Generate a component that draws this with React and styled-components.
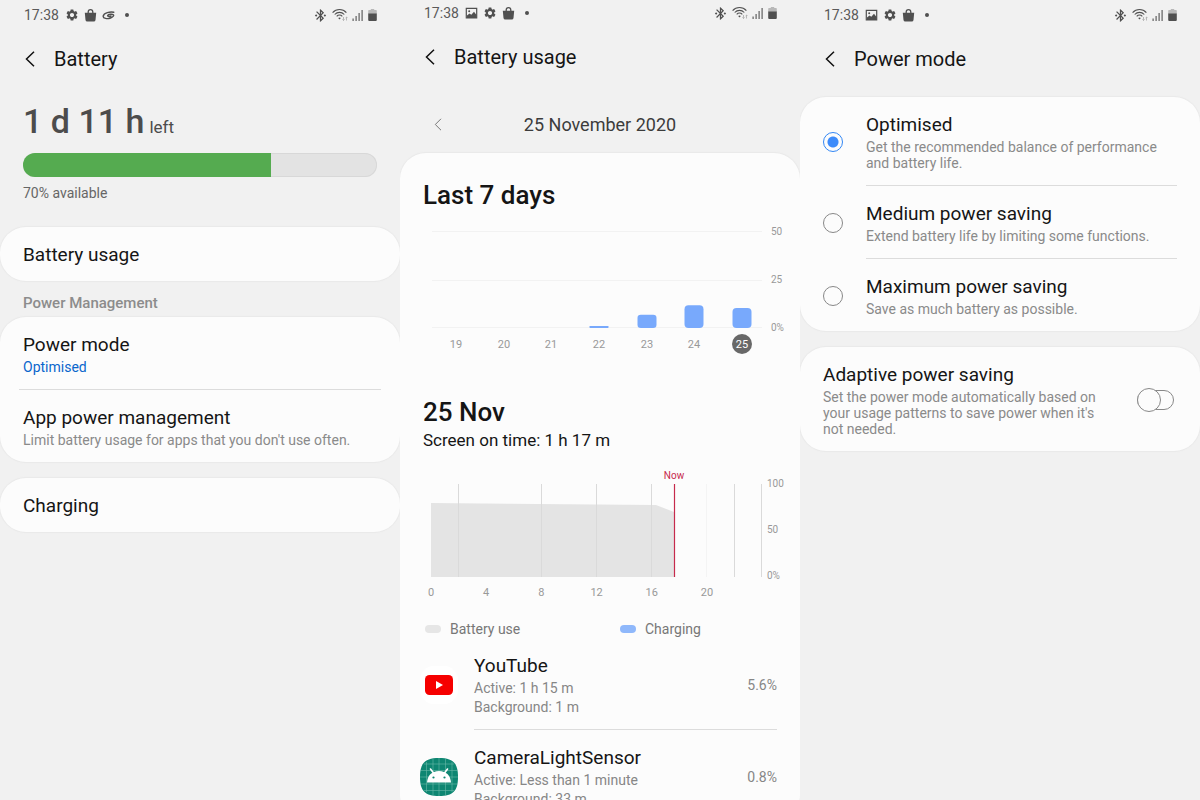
import React, { useState } from 'react'
import styled, { createGlobalStyle } from 'styled-components'
import { MdBluetoothConnected, MdSettings } from 'react-icons/md'

const week = [
    {day: 19, use: 0},
    {day: 20, use: 0},
    {day: 21, use: 0},
    {day: 22, use: 1},
    {day: 23, use: 7},
    {day: 24, use: 12},
    {day: 25, use: 10.5},
]

const modes = [
    {id: 'optimised', title: 'Optimised', text: 'Get the recommended balance of performance and battery life.'},
    {id: 'medium', title: 'Medium power saving', text: 'Extend battery life by limiting some functions.'},
    {id: 'maximum', title: 'Maximum power saving', text: 'Save as much battery as possible.'},
]

function ImageIcon() {
    return (
        <svg width="13" height="13" viewBox="0 0 13 13">
            <path d="M1.300 1.300h10.400v9.700H1.300z" fill="none" stroke="#505050" strokeWidth="1.200" />
            <path d="M2 11V8.500l2.500-2 1.800 1.300 2.700-3L11.500 8v3z" fill="#505050" />
            <circle cx="4.200" cy="4.200" r="1" fill="#505050" />
        </svg>
    )
}

function BagIcon() {
    return (
        <svg width="13" height="13" viewBox="0 0 13 13">
            <path d="M.8 3.800h11.400l-.7 7.100a1.800 1.800 0 0 1-1.800 1.600H3.300a1.800 1.800 0 0 1-1.800-1.600z" fill="#505050" />
            <path d="M4.200 4.200V3a2.300 2.300 0 0 1 4.600 0v1.200" fill="none" stroke="#505050" strokeWidth="1.300" />
        </svg>
    )
}

function SwirlIcon() {
    return (
        <svg width="13" height="13" viewBox="0 0 13 13" fill="none" stroke="#505050" strokeLinecap="round">
            <path d="M11.800 3.200C8 2.400 1.800 3.800 1.200 7c-.4 2.600 4.300 3.200 7.300 2 2.300-.9 3.800-2.400 2.800-3.300-1.200-1-4.800-.4-5.600.8-.5 1 1.600 1.300 3.300.5" strokeWidth="1.400" />
        </svg>
    )
}

function WifiIcon() {
    return (
        <svg width="16" height="14" viewBox="0 0 16 14" fill="none" stroke="#505050" strokeWidth="1.100">
            <path d="M.6 4.600C4.400.4 10.600.4 14.400 4.600" />
            <path d="M2.700 6.500c2.700-2.900 6.900-2.900 9.600 0" />
            <path d="M4.700 8.300c1.600-1.700 4-1.700 5.600 0" />
            <path d="M6.200 10a1.900 1.900 0 0 1 2.600 0l-1.300 1.500z" fill="#505050" stroke="none" />
            <path d="M11.500 9v3.500M10.400 11.400l1.100 1.100 1.100-1.100M14.500 12.500V9M13.600 9.900l.9-.9.9.9" stroke="#aaa" strokeWidth=".8" />
        </svg>
    )
}

function SignalIcon() {
    return (
        <svg width="12" height="12" viewBox="0 0 12 12" fill="#606060">
            <path d="M.5 9.500h1.200V12H.5zM3.500 7h1.200v5H3.500zM6.500 4h1.200v8H6.500zM9.500 1h1.200v11H9.500z" />
        </svg>
    )
}

function BatteryIcon() {
    return (
        <svg width="9" height="12" viewBox="0 0 9 12">
            <path d="M2.800 0h3.400v1H8a.8.800 0 0 1 .8.800V5H.2V1.800A.8.800 0 0 1 1 1h1.800z" fill="#b8b8b8" />
            <path d="M.2 4.500h8.600V11a1 1 0 0 1-1 1H1.200a1 1 0 0 1-1-1z" fill="#505050" />
        </svg>
    )
}

function Chevron({small}) {
    return small ? (
        <svg width="8" height="13" viewBox="0 0 8 13" fill="none" stroke="#777">
            <path d="M7 .8L1.300 6.500 7 12.200" />
        </svg>
    ) : (
        <svg width="10" height="16" viewBox="0 0 10 16" fill="none" stroke="#111" strokeWidth="1.500">
            <path d="M9 .8L1.500 8 9 15.200" />
        </svg>
    )
}

function YouTubeIcon() {
    return (
        <svg width="38" height="38" viewBox="0 0 38 38">
            <rect width="38" height="38" rx="14" fill="#fff" />
            <rect x="5" y="9" width="28" height="20" rx="4.500" fill="#f60000" />
            <path d="M16 15v8l7-4z" fill="#fff" />
        </svg>
    )
}

function AndroidIcon() {
    return (
        <svg width="38" height="38" viewBox="0 0 38 38">
            <path d="M19 0C33 0 38 5 38 19S33 38 19 38 0 33 0 19 5 0 19 0z" fill="#0e8672" />
            <path d="M6.500 4v30M13 1v36M19 0v38M25.500 1v36M32 4v30M4 6h30M1 12.500h36M0 19h38M1 26h36M4 32.500h30" stroke="#69b8a8" strokeWidth=".6" />
            <path d="M10.500 11l3 4M27.500 11l-3 4" stroke="#fff" strokeWidth="1.600" strokeLinecap="round" />
            <path d="M7 24.500c.3-6.500 4.500-11.500 12-11.500s11.700 5 12 11.500z" fill="#fff" />
            <circle cx="13.500" cy="19.500" r="1.100" fill="#0e8672" />
            <circle cx="24.500" cy="19.500" r="1.100" fill="#0e8672" />
        </svg>
    )
}

function StatusBar({icons}) {
    return (
        <StatusStyled>
            <time>17:38</time>
            {icons}
            <i />
            <div className="system">
                <MdBluetoothConnected size={15} />
                <WifiIcon />
                <SignalIcon />
                <BatteryIcon />
            </div>
        </StatusStyled>
    )
}

function Header({title}) {
    return (
        <HeaderStyled>
            <IconButton aria-label="Back"><Chevron /></IconButton>
            <h1>{title}</h1>
        </HeaderStyled>
    )
}

function WeekChart() {
    return (
        <ChartSvg viewBox="0 0 400 183" role="img" aria-label="Battery use in the last 7 days">
            <path className="grid" d="M32 19.500h330M32 68.500h330M32 115.500h330" />
            <text className="scale" x="371" y="23">50</text>
            <text className="scale" x="371" y="71">25</text>
            <text className="scale" x="371" y="119">0%</text>
            {week.map(({day, use}, i) => {
                const x = 56 + i * 48 - Math.round(i / 3)
                const height = use * 1.9
                const today = day === 25
                return (
                    <g key={day}>
                        {use > 0 && <rect x={x - 9.5} y={116 - height} width="19" height={height} rx={Math.min(4, height / 4)} fill="#78a9fc" />}
                        {today && <circle cx={x} cy="132" r="10" fill="#686868" />}
                        <text className={today ? 'today' : 'day'} x={x} y="136">{day}</text>
                    </g>
                )
            })}
        </ChartSvg>
    )
}

function DayChart() {
    return (
        <ChartSvg viewBox="0 0 400 170" role="img" aria-label="Battery level on 25 Nov">
            <path d="M31 52l225 2 18 7v65H31z" fill="#e4e4e4" />
            <path className="hour" d="M58.500 33v93M141.500 33v93M196.500 33v93M251.500 33v93M334.500 33v93M361.500 33v93" />
            <path className="faint" d="M306.500 33v93" />
            <path d="M274.500 33v93" stroke="#c62a4c" strokeWidth="1.200" />
            <text className="now" x="274" y="28">Now</text>
            {[0, 4, 8, 12, 16, 20].map(hour => (
                <text className="day" key={hour} x={31 + hour * 13.8} y="145">{hour}</text>
            ))}
            <text className="scale" x="367" y="36">100</text>
            <text className="scale" x="367" y="82">50</text>
            <text className="scale" x="367" y="128">0%</text>
        </ChartSvg>
    )
}

function App() {
    const [mode, setMode] = useState('optimised')
    const [adaptive, setAdaptive] = useState(false)

    return (
        <Phones>
            <GlobalStyle />
            <Screen>
                <StatusBar icons={<><MdSettings size={14} /><BagIcon /><SwirlIcon /></>} />
                <Header title="Battery" />
                <Summary>
                    <p className="time"><strong>1 d 11 h</strong> left</p>
                    <Meter role="progressbar" aria-label="Battery level" aria-valuenow={70}>
                        <span style={{width: '70%'}} />
                    </Meter>
                    <p className="available">70% available</p>
                </Summary>
                <Card>
                    <Row><Title>Battery usage</Title></Row>
                </Card>
                <GroupLabel>Power Management</GroupLabel>
                <Card>
                    <Row>
                        <Title>Power mode</Title>
                        <Text $active>Optimised</Text>
                    </Row>
                    <Divider />
                    <Row>
                        <Title>App power management</Title>
                        <Text>Limit battery usage for apps that you don't use often.</Text>
                    </Row>
                </Card>
                <Card $gap={16}>
                    <Row><Title>Charging</Title></Row>
                </Card>
            </Screen>

            <Screen $top={0}>
                <StatusBar icons={<><ImageIcon /><MdSettings size={14} /><BagIcon /></>} />
                <Header title="Battery usage" />
                <DateBar>
                    <IconButton aria-label="Previous day"><Chevron small /></IconButton>
                    <span>25 November 2020</span>
                </DateBar>
                <UsageCard>
                    <h2>Last 7 days</h2>
                    <WeekChart />
                    <h2>25 Nov</h2>
                    <p className="screen-time">Screen on time: 1 h 17 m</p>
                    <DayChart />
                    <Legend>
                        <LegendItem $color="#e6e6e6">Battery use</LegendItem>
                        <LegendItem $color="#8fb8fb">Charging</LegendItem>
                    </Legend>
                    <AppRow>
                        <YouTubeIcon />
                        <div className="info">
                            <Title>YouTube</Title>
                            <p>Active: 1 h 15 m</p>
                            <p>Background: 1 m</p>
                        </div>
                        <span className="percent">5.6%</span>
                    </AppRow>
                    <Divider $left={74} $right={23} />
                    <AppRow>
                        <AndroidIcon />
                        <div className="info">
                            <Title>CameraLightSensor</Title>
                            <p>Active: Less than 1 minute</p>
                            <p>Background: 33 m</p>
                        </div>
                        <span className="percent">0.8%</span>
                    </AppRow>
                </UsageCard>
            </Screen>

            <Screen>
                <StatusBar icons={<><ImageIcon /><MdSettings size={14} /><BagIcon /></>} />
                <Header title="Power mode" />
                <Card $gap={8}>
                    {modes.map((item, i) => (
                        <React.Fragment key={item.id}>
                            {i > 0 && <Divider $left={66} $right={23} />}
                            <Option>
                                <Radio name="mode" checked={mode === item.id} onChange={() => setMode(item.id)} />
                                <span>
                                    <Title>{item.title}</Title>
                                    <Text>{item.text}</Text>
                                </span>
                            </Option>
                        </React.Fragment>
                    ))}
                </Card>
                <Card $gap={16}>
                    <SwitchRow>
                        <span>
                            <Title>Adaptive power saving</Title>
                            <Text>Set the power mode automatically based on your usage patterns to save power when it's not needed.</Text>
                        </span>
                        <Switch checked={adaptive} onChange={() => setAdaptive(!adaptive)} />
                    </SwitchRow>
                </Card>
            </Screen>
        </Phones>
    )
}

const GlobalStyle = createGlobalStyle`
    *{
        box-sizing: border-box;
        margin: 0;
        padding: 0;
    }
    body{
        background: #f1f1f1;
        color: #151515;
        font-family: Roboto, sans-serif;
        font-size: 14px;
    }
    button{
        background: none;
        border: none;
        font: inherit;
        color: inherit;
        text-align: left;
        cursor: pointer;
    }
    svg{
        display: block;
        flex: none;
    }
`;

const Phones = styled.main`
    display: grid;
    grid-template-columns: repeat(3, 1fr);
    height: 100vh;
    overflow: hidden;
`;

const Screen = styled.section`
    min-width: 0;
    padding-top: ${({$top = 2}) => $top}px;
    overflow: hidden;
`;

const StatusStyled = styled.div`
    display: flex;
    align-items: center;
    gap: 5px;
    height: 26px;
    padding: 0 23px 0 24px;
    color: #505050;
    time{
        color: #5a5a5a;
        margin-right: 1px;
    }
    i{
        width: 4px;
        height: 4px;
        margin-left: 5px;
        border-radius: 50%;
        background: #505050;
    }
    .system{
        display: flex;
        align-items: center;
        gap: 4px;
        margin-left: auto;
    }
`;

const HeaderStyled = styled.header`
    display: flex;
    align-items: center;
    height: 61px;
    padding-left: 17px;
    gap: 11px;
    h1{
        font-size: 20px;
        font-weight: 400;
    }
`;

const IconButton = styled.button`
    display: flex;
    align-items: center;
    justify-content: center;
    width: 26px;
    height: 32px;
`;

const Summary = styled.div`
    padding: 8px 23px 26px;
    .time{
        display: flex;
        align-items: baseline;
        gap: 5px;
        font-size: 17px;
        color: #4c4c4c;
    }
    strong{
        font-size: 34px;
        font-weight: 500;
        line-height: 48px;
    }
    .available{
        line-height: 16px;
        color: #666;
    }
`;

const Meter = styled.div`
    height: 24px;
    margin: 8px 0;
    border-radius: 12px;
    background: #e3e3e3;
    box-shadow: inset 0 0 0 1px #d8d8d8;
    overflow: hidden;
    span{
        display: block;
        height: 100%;
        background: #55ab50;
    }
`;

const Card = styled.div`
    margin-top: ${({$gap = 0}) => $gap}px;
    border-radius: 26px;
    background: #fcfcfc;
    box-shadow: 0 0 1px 1px #e9e9e9;
`;

const Row = styled.button`
    display: block;
    width: 100%;
    padding: 15px 23px 13px;
`;

const Title = styled.span`
    display: block;
    font-size: 19px;
    line-height: 26px;
`;

const Text = styled.span`
    display: block;
    margin: 1px 0;
    line-height: 16px;
    color: ${({$active}) => $active ? '#0a66cc' : '#8a8a8a'};
`;

const Divider = styled.hr`
    margin-left: ${({$left = 19}) => $left}px;
    margin-right: ${({$right = 19}) => $right}px;
    border: none;
    border-top: 1px solid #dcdcdc;
`;

const GroupLabel = styled.h2`
    padding: 14px 23px 6px;
    font-size: 15px;
    font-weight: 500;
    line-height: 16px;
    color: #8c8c8c;
`;

const DateBar = styled.div`
    display: grid;
    grid-template-columns: 26px 1fr 26px;
    align-items: center;
    height: 66px;
    padding: 8px 25px 0;
    span{
        font-size: 18px;
        text-align: center;
        color: #3c3c3c;
    }
`;

const UsageCard = styled(Card)`
    padding-top: 25px;
    h2{
        padding: 0 23px;
        font-size: 26px;
        font-weight: 500;
        line-height: 34px;
    }
    .screen-time{
        padding: 0 23px;
        font-size: 17px;
        line-height: 22px;
    }
`;

const ChartSvg = styled.svg`
    width: 100%;
    font-size: 11px;
    .grid{
        stroke: #f2f2f2;
    }
    .hour{
        stroke: #dadada;
    }
    .faint{
        stroke: #f4f4f4;
    }
    text{
        fill: #999;
    }
    .scale{
        font-size: 10px;
    }
    .day, .today, .now{
        text-anchor: middle;
    }
    text.today{
        fill: #fff;
    }
    text.now{
        font-size: 10px;
        fill: #c62a4c;
    }
`;

const Legend = styled.div`
    display: grid;
    grid-template-columns: 52% 1fr;
    padding: 0 0 1px 25px;
`;

const LegendItem = styled.div`
    display: flex;
    align-items: center;
    gap: 9px;
    line-height: 16px;
    color: #777;
    &::before{
        content: '';
        width: 16px;
        height: 8px;
        border-radius: 4px;
        background: ${({$color}) => $color};
    }
`;

const AppRow = styled.div`
    display: flex;
    align-items: center;
    gap: 16px;
    padding: 15px 23px 12px 20px;
    color: #868686;
    .info{
        flex: 1;
        line-height: 19px;
    }
    ${Title}{
        color: #151515;
    }
`;

const Option = styled.label`
    display: flex;
    align-items: center;
    gap: 23px;
    padding: 15px 23px 13px;
    cursor: pointer;
`;

const Radio = styled.input.attrs({type: 'radio'})`
    appearance: none;
    flex: none;
    width: 20px;
    height: 20px;
    border: 1px solid #888;
    border-radius: 50%;
    &:checked{
        border-color: #3287f5;
        background: radial-gradient(circle, #3d8bfa 5px, transparent 6px);
    }
`;

const SwitchRow = styled.label`
    display: flex;
    align-items: center;
    justify-content: space-between;
    gap: 40px;
    padding: 15px 26px 13px 23px;
    cursor: pointer;
    > span{
        max-width: 280px;
    }
`;

const Switch = styled.input.attrs({type: 'checkbox', role: 'switch'})`
    appearance: none;
    display: flex;
    align-items: center;
    flex: none;
    width: 37px;
    height: 20px;
    border: 1px solid #888;
    border-radius: 10px;
    &::before{
        content: '';
        width: 22px;
        height: 22px;
        margin: 0 -1px;
        border: 1px solid #888;
        border-radius: 50%;
        background: #fcfcfc;
    }
    &:checked{
        justify-content: flex-end;
        background: #3d8bfa;
    }
`;

export default App
